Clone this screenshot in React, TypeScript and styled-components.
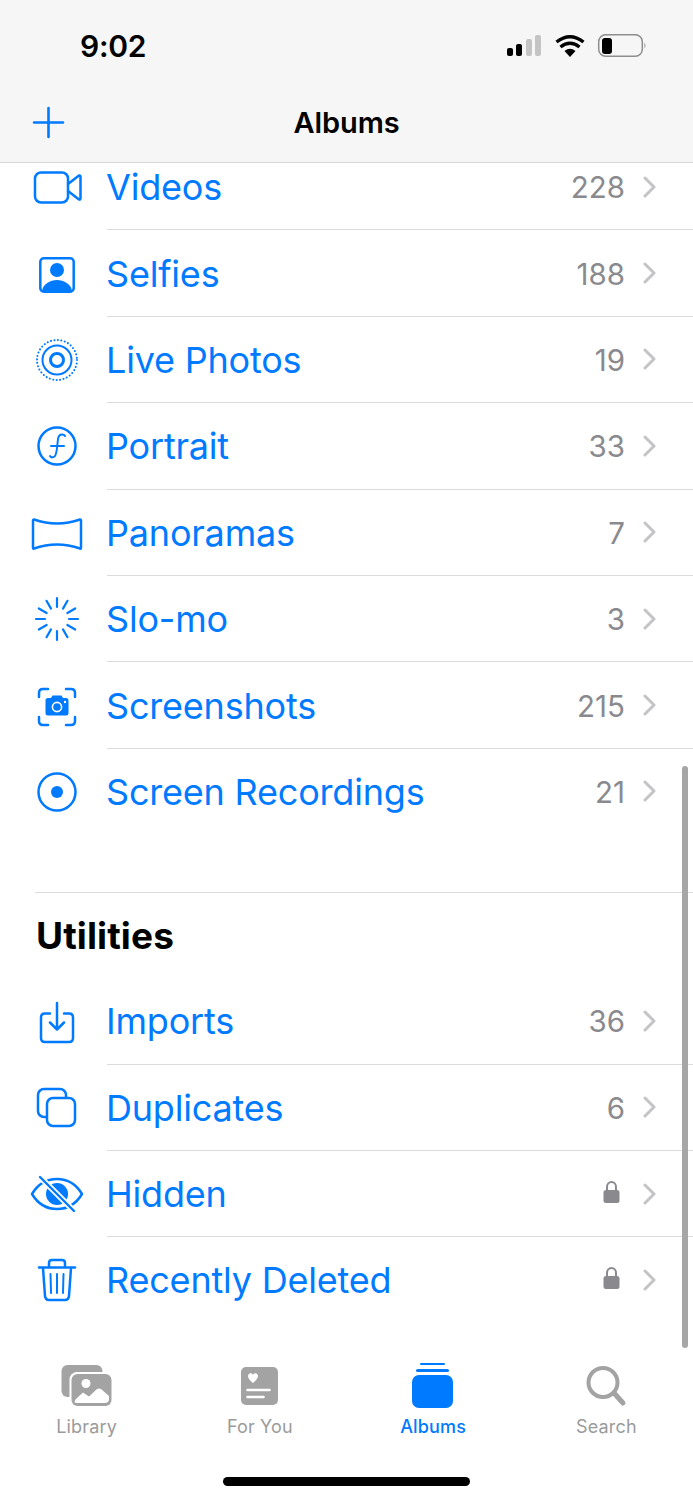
import styled, { createGlobalStyle } from "styled-components";
import { ReactNode } from "react";

const BLUE = "#007aff";

const GlobalStyle = createGlobalStyle`
  html, body {
    margin: 0;
    padding: 0;
    background: #fff;
  }
  body {
    font-family: Inter, "Liberation Sans", sans-serif;
  }
`;

const Page = styled.div`
  width: 693px;
  height: 1500px;
  display: flex;
  flex-direction: column;
  overflow: hidden;
  background: #fff;
`;

const Header = styled.header`
  height: 162px;
  flex: none;
  background: #f6f6f6;
  border-bottom: 1px solid #d6d6d6;
`;

const StatusBar = styled.div`
  height: 80px;
  padding-top: 6px;
  display: flex;
  align-items: center;
  justify-content: space-between;
  padding-left: 80px;
  padding-right: 46px;
`;

const Time = styled.span`
  font-size: 30px;
  font-weight: 600;
  color: #000;
  letter-spacing: -0.3px;
`;

const StatusIcons = styled.svg`
  width: 141px;
  height: 24px;
  display: block;
`;

const NavBar = styled.div`
  height: 72px;
  padding-bottom: 4px;
  position: relative;
  display: flex;
  align-items: center;
  justify-content: center;
`;

const NavTitle = styled.h1`
  margin: 0;
  font-size: 29px;
  font-weight: 600;
  color: #000;
  letter-spacing: -0.1px;
`;

const AddButton = styled.svg`
  position: absolute;
  left: 32px;
  top: 20px;
  width: 33px;
  height: 33px;
`;

const Scroller = styled.main`
  flex: 1;
  position: relative;
  overflow: hidden;
`;

const Content = styled.div`
  margin-top: -19px;
`;

const Row = styled.div`
  height: 86.4px;
  display: flex;
  padding-left: 27px;
`;

const IconBox = styled.svg`
  width: 60px;
  height: 60px;
  flex: none;
  align-self: center;
  margin-right: 20px;
  fill: none;
  stroke: ${BLUE};
  stroke-width: 2.5;
  stroke-linecap: round;
  stroke-linejoin: round;
`;

const RowBody = styled.div<{ $last?: boolean }>`
  flex: 1;
  display: flex;
  align-items: center;
  padding-right: 37px;
  border-bottom: 1px solid ${(p) => (p.$last ? "transparent" : "#dcdcdc")};
`;

const RowTitle = styled.span`
  flex: 1;
  margin: 1px 0 0 -1px;
  font-size: 36px;
  color: ${BLUE};
  letter-spacing: -0.2px;
`;

const Count = styled.span`
  font-size: 29.5px;
  color: #8a8a8e;
  margin-top: 1px;
`;

const Chevron = styled.svg`
  width: 13px;
  height: 22px;
  margin-left: 18px;
  flex: none;
  fill: none;
  stroke: #c4c4c7;
  stroke-width: 3;
  stroke-linecap: round;
  stroke-linejoin: round;
`;

const Lock = styled.svg`
  width: 17px;
  height: 24px;
  margin-bottom: 3px;
  margin-right: 5px;
  flex: none;
`;

const SectionHeader = styled.div`
  margin-top: 57px;
  margin-left: 35px;
  height: 85px;
  border-top: 1px solid #dcdcdc;
  display: flex;
  align-items: center;
`;

const SectionTitle = styled.h2`
  margin: 0 0 0 1px;
  font-size: 37px;
  font-weight: 700;
  color: #000;
  letter-spacing: 0.1px;
`;

const ScrollThumb = styled.div`
  position: absolute;
  left: 682px;
  top: 603px;
  width: 6px;
  height: 582px;
  border-radius: 3px;
  background: #a6a6a6;
`;

const TabBar = styled.nav`
  height: 150px;
  flex: none;
  padding-top: 13px;
  box-sizing: border-box;
  display: flex;
  flex-direction: column;
  align-items: center;
  background: #fff;
`;

const TabRow = styled.div`
  width: 100%;
  display: grid;
  grid-template-columns: repeat(4, 1fr);
`;

const Tab = styled.div<{ $active?: boolean }>`
  display: flex;
  flex-direction: column;
  align-items: center;
  color: ${(p) => (p.$active ? BLUE : "#9b9b9b")};
  font-weight: ${(p) => (p.$active ? 500 : 400)};
`;

const TabIcon = styled.svg`
  width: 60px;
  height: 46px;
  display: block;
`;

const TabLabel = styled.span`
  margin-top: 7px;
  font-size: 18px;
  line-height: 22px;
  letter-spacing: 0.15px;
`;

const HomeIndicator = styled.div`
  margin-top: 39px;
  width: 247px;
  height: 9px;
  border-radius: 5px;
  background: #000;
`;

const icons: Record<string, ReactNode> = {
  videos: (
    <>
      <rect x="8" y="15.5" width="33" height="30" rx="6" />
      <path d="M41 27 L52 18.5 Q53.5 18 53.5 20 V41 Q53.5 43 52 42.5 L41 34" />
    </>
  ),
  selfies: (
    <>
      <rect x="13.3" y="14.3" width="33.4" height="33.4" rx="3.5" />
      <circle cx="30" cy="26" r="7" fill={BLUE} stroke="none" />
      <path
        d="M15 47 C16 40 23 36 30 36 C37 36 44 40 45 47 Z"
        fill={BLUE}
        stroke="none"
      />
    </>
  ),
  live: (
    <>
      <circle cx="30" cy="30" r="20" strokeDasharray="0.1 3.4" strokeWidth="2" />
      <circle cx="30" cy="30" r="14.5" strokeWidth="2" />
      <circle cx="30" cy="30" r="6.5" strokeWidth="3" />
    </>
  ),
  portrait: (
    <>
      <circle cx="30" cy="30" r="18.5" />
      <path
        d="M23 40 C24 41.5 26 41.5 27.5 40.5 C29 39.5 29.5 36 30 32 L31 23 C31.5 20 33 18.5 35 18.5 C36.5 18.5 37.5 19 38 20"
        strokeWidth="2"
      />
      <path d="M24 30 H37" strokeWidth="2" />
    </>
  ),
  panoramas: (
    <path d="M7 16.5 Q30 24.5 53 16.5 Q54 16.5 54 18 V44.5 Q54 46 53 45.5 Q30 37.5 7 45.5 Q6 46 6 44.5 V18 Q6 16.5 7 16.5 Z" />
  ),
  slomo: (
    <g strokeWidth="2.2">
      {Array.from({ length: 12 }).map((_, i) => (
        <path key={i} d="M30 9 V18" transform={`rotate(${i * 30} 30 30)`} />
      ))}
    </g>
  ),
  screenshots: (
    <>
      <path d="M12 21 V17 Q12 13 16 13 H21 M39 13 H44 Q48 13 48 17 V21 M48 41 V45 Q48 49 44 49 H39 M21 49 H16 Q12 49 12 45 V41" />
      <path
        d="M21 22 H24 L25.5 19.5 H34.5 L36 22 H39 Q41.5 22 41.5 24.5 V37 Q41.5 39.5 39 39.5 H21 Q18.5 39.5 18.5 37 V24.5 Q18.5 22 21 22 Z"
        fill={BLUE}
        stroke="none"
      />
      <circle cx="30" cy="31" r="4.6" stroke="#fff" strokeWidth="1.6" />
      <circle cx="38" cy="26" r="1.2" fill="#fff" stroke="none" />
    </>
  ),
  recordings: (
    <>
      <circle cx="30" cy="30" r="18.5" />
      <circle cx="30" cy="30" r="6" fill={BLUE} stroke="none" />
    </>
  ),
  imports: (
    <>
      <path d="M23 22.5 H18 Q14 22.5 14 26.5 V47 Q14 51 18 51 H42 Q46 51 46 47 V26.5 Q46 22.5 42 22.5 H37" />
      <path d="M30 12 V38 M23 31.5 L30 38.5 L37 31.5" />
    </>
  ),
  duplicates: (
    <>
      <rect x="11" y="11" width="28" height="28" rx="6" />
      <rect x="20" y="20" width="28" height="28" rx="6" fill="#fff" />
    </>
  ),
  hidden: (
    <>
      <path d="M5 30 C11 20 20 15 30 15 C40 15 49 20 55 30 C49 40 40 45 30 45 C20 45 11 40 5 30 Z" />
      <circle cx="30" cy="30" r="11" fill={BLUE} stroke="none" />
      <path d="M13 13 L47 47" stroke="#fff" strokeWidth="6" strokeLinecap="butt" />
      <path d="M13 13 L47 47" strokeWidth="2.4" />
    </>
  ),
  trash: (
    <>
      <path d="M12 17.5 H48" />
      <path d="M22 17 V13 Q22 10 25 10 H35 Q38 10 38 13 V17" />
      <path d="M16 18 L18 46 Q18.5 50 22 50 H38 Q41.5 50 42 46 L44 18" />
      <path d="M23.5 24 L24 43 M30 24 V43 M36.5 24 L36 43" strokeWidth="2" />
    </>
  ),
};

const ChevronIcon = () => (
  <Chevron viewBox="0 0 13 22">
    <path d="M2 2 L11 11 L2 20" />
  </Chevron>
);

const LockIcon = () => (
  <Lock viewBox="0 0 17 24">
    <path
      d="M4 11 V7 C4 4 6 2 8.5 2 C11 2 13 4 13 7 V11"
      fill="none"
      stroke="#8a8a8e"
      strokeWidth="2"
    />
    <rect x="0.5" y="10" width="16" height="13" rx="2.5" fill="#8a8a8e" />
  </Lock>
);

type Album = { icon: string; title: string; count?: string };

const mediaTypes: Album[] = [
  { icon: "videos", title: "Videos", count: "228" },
  { icon: "selfies", title: "Selfies", count: "188" },
  { icon: "live", title: "Live Photos", count: "19" },
  { icon: "portrait", title: "Portrait", count: "33" },
  { icon: "panoramas", title: "Panoramas", count: "7" },
  { icon: "slomo", title: "Slo-mo", count: "3" },
  { icon: "screenshots", title: "Screenshots", count: "215" },
  { icon: "recordings", title: "Screen Recordings", count: "21" },
];

const utilities: Album[] = [
  { icon: "imports", title: "Imports", count: "36" },
  { icon: "duplicates", title: "Duplicates", count: "6" },
  { icon: "hidden", title: "Hidden" },
  { icon: "trash", title: "Recently Deleted" },
];

const AlbumRow = ({ album, last }: { album: Album; last?: boolean }) => (
  <Row>
    <IconBox viewBox="0 0 60 60">{icons[album.icon]}</IconBox>
    <RowBody $last={last}>
      <RowTitle>{album.title}</RowTitle>
      {album.count ? <Count>{album.count}</Count> : <LockIcon />}
      <ChevronIcon />
    </RowBody>
  </Row>
);

const App = () => {
  return (
    <Page>
      <GlobalStyle />
      <Header>
        <StatusBar>
          <Time>9:02</Time>
          <StatusIcons viewBox="0 0 141 24">
            <rect x="1" y="14" width="6" height="8" rx="2" fill="#000" />
            <rect x="10" y="10" width="6" height="12" rx="2" fill="#000" />
            <rect x="20" y="5" width="6" height="17" rx="2" fill="#c4c4c4" />
            <rect x="29" y="1" width="6" height="21" rx="2" fill="#c4c4c4" />
            <path d="M64 23 L58.5 17 Q64 12.5 69.5 17 Z" fill="#000" />
            <path
              d="M54.5 13 Q64 5.5 73.5 13 M50.5 8 Q64 -2.5 77.5 8"
              fill="none"
              stroke="#000"
              strokeWidth="3.4"
            />
            <rect x="92.7" y="0.7" width="43.6" height="21.6" rx="7" fill="none" stroke="#8e8e8e" strokeWidth="1.5" />
            <rect x="96" y="4" width="10" height="16" rx="3" fill="#000" />
            <path d="M138.5 8.5 Q140.5 11.5 138.5 14.5 Z" fill="#8e8e8e" />
          </StatusIcons>
        </StatusBar>
        <NavBar>
          <AddButton viewBox="0 0 33 33">
            <path
              d="M16.5 2 V31 M2 16.5 H31"
              stroke={BLUE}
              strokeWidth="2.6"
              strokeLinecap="round"
            />
          </AddButton>
          <NavTitle>Albums</NavTitle>
        </NavBar>
      </Header>
      <Scroller>
        <Content>
          {mediaTypes.map((album, i) => (
            <AlbumRow
              key={album.title}
              album={album}
              last={i === mediaTypes.length - 1}
            />
          ))}
          <SectionHeader>
            <SectionTitle>Utilities</SectionTitle>
          </SectionHeader>
          {utilities.map((album, i) => (
            <AlbumRow
              key={album.title}
              album={album}
              last={i === utilities.length - 1}
            />
          ))}
        </Content>
        <ScrollThumb />
      </Scroller>
      <TabBar>
        <TabRow>
          <Tab>
            <TabIcon viewBox="0 0 60 46">
              <rect x="4.5" y="2" width="41" height="32" rx="6" fill="#a3a3a3" />
              <rect x="12.5" y="9" width="44" height="36" rx="7.5" fill="#fff" />
              <rect x="14.5" y="11" width="40" height="32" rx="6" fill="#a3a3a3" />
              <circle cx="29" cy="20.5" r="4.5" fill="#fff" />
              <path
                d="M17.5 39 Q18 36.5 20 35 L26 29.5 L32 33.5 L40 26 Q42 25 44 26 L52 33 V36 Q52 40 48 40 H20 Q17.5 40 17.5 39 Z"
                fill="#fff"
              />
            </TabIcon>
            <TabLabel>Library</TabLabel>
          </Tab>
          <Tab>
            <TabIcon viewBox="0 0 60 46">
              <rect x="11" y="4" width="37" height="38" rx="5" fill="#a3a3a3" />
              <path
                d="M23 20 C20 17.5 18 15.5 18 13 C18 10 22 9 23 12 C24 9 28 10 28 13 C28 15.5 26 17.5 23 20 Z"
                fill="#fff"
              />
              <path
                d="M17.5 27 H39.5 M17.5 34 H33.5"
                stroke="#fff"
                strokeWidth="2.6"
                strokeLinecap="round"
              />
            </TabIcon>
            <TabLabel>For You</TabLabel>
          </Tab>
          <Tab $active>
            <TabIcon viewBox="0 0 60 46">
              <rect x="17" y="0" width="25" height="2" rx="1" fill={BLUE} />
              <rect x="13" y="6" width="33" height="3" rx="1.5" fill={BLUE} />
              <rect x="9" y="12" width="41" height="33" rx="7" fill={BLUE} />
            </TabIcon>
            <TabLabel>Albums</TabLabel>
          </Tab>
          <Tab>
            <TabIcon viewBox="0 0 60 46">
              <circle cx="27" cy="19.5" r="14.5" fill="none" stroke="#a3a3a3" strokeWidth="4" />
              <path
                d="M38 30 L47 40"
                stroke="#a3a3a3"
                strokeWidth="5"
                strokeLinecap="round"
              />
            </TabIcon>
            <TabLabel>Search</TabLabel>
          </Tab>
        </TabRow>
        <HomeIndicator />
      </TabBar>
    </Page>
  );
};

export default App;
